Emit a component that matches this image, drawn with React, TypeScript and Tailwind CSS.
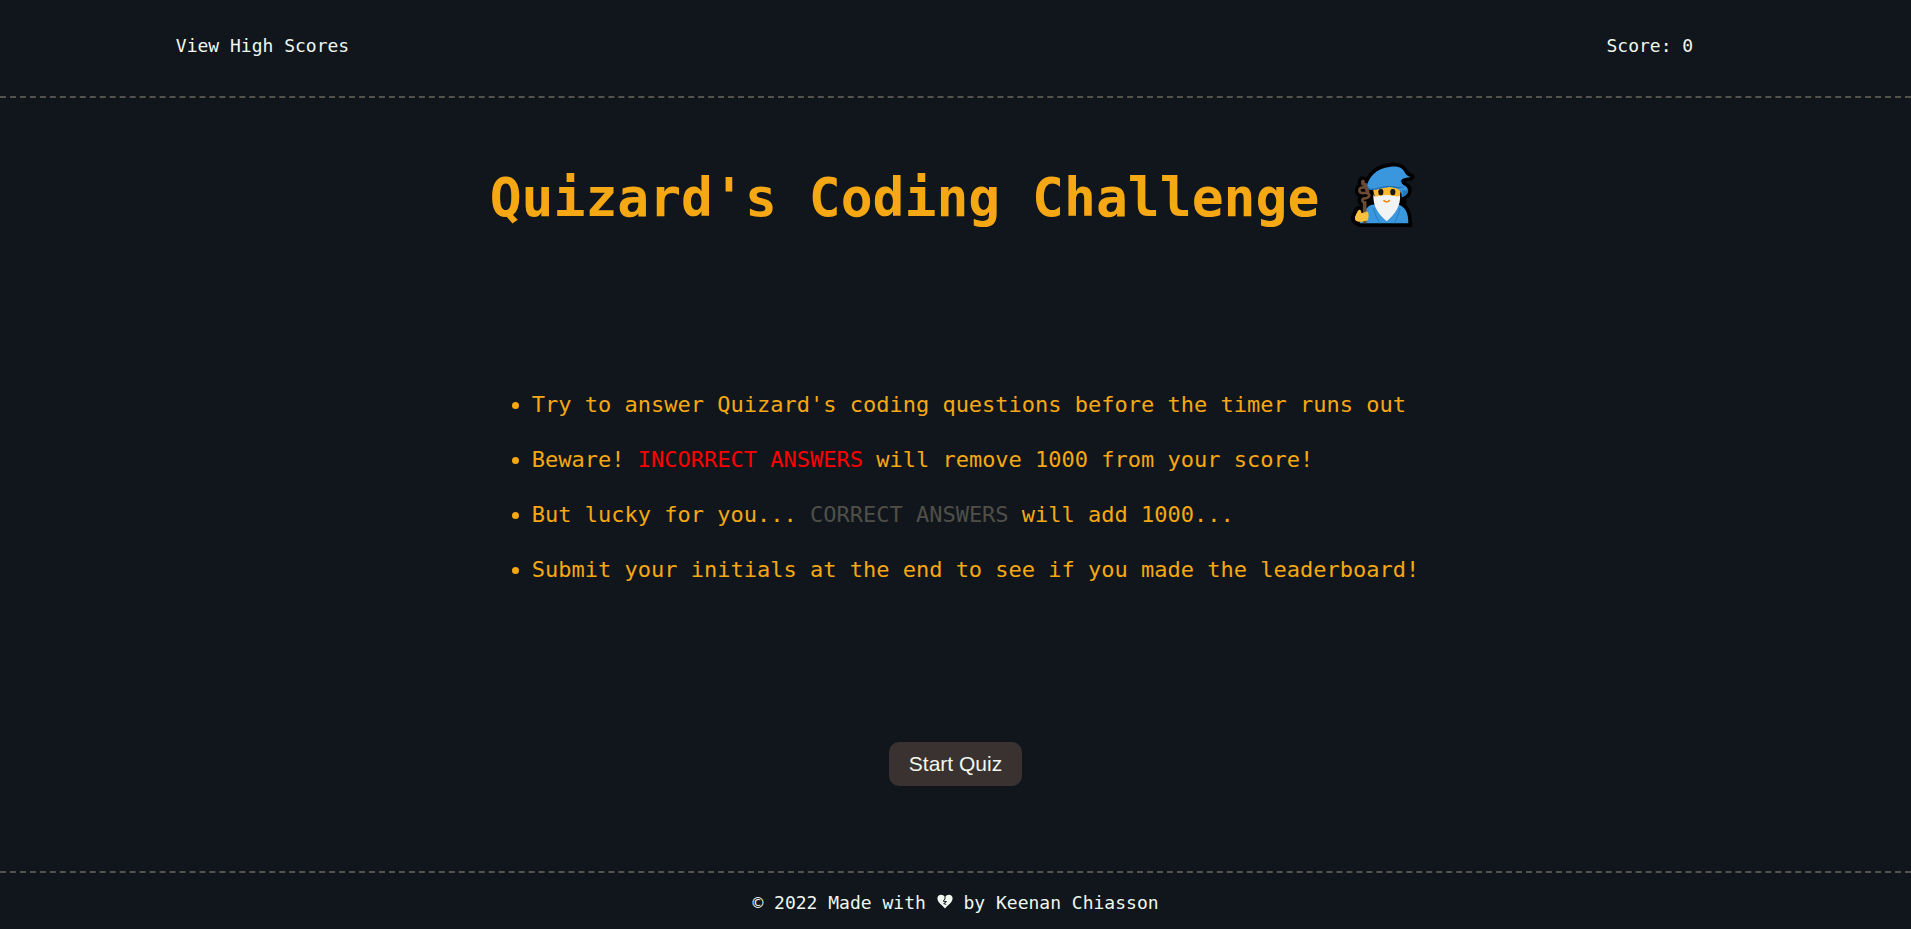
import React from "react";

const HAT =
  "M83 112C89 84 110 57 154 52C176 49 190 56 195 65C199 75 206 81 215 83C203 86 193 84 187 93C184 102 190 106 199 110C211 117 211 136 188 144C190 127 182 119 166 115C144 108 122 121 99 122C90 122 84 117 83 112Z";
const ROBE =
  "M90 170C102 162 118 166 143 168C164 166 174 162 186 169C202 178 208 195 208 222H62L74 186Z";
const STAFF =
  "M77 218V160Q66 156 72 148Q90 147 91 138Q88 128 77 131Q62 133 61 124Q61 114 72 115Q81 114 80 105Q68 106 71 95";
const HAND = "M66 186C66 178 56 180 54 190L48 204Q46 216 60 217H78Q89 214 88 202V190Q84 184 77 188L68 192Z";

function Wizard() {
  return (
    <svg role="img" aria-label="Wizard" viewBox="12 38 234 198" className="h-[66px] w-[78px] shrink-0">
      <g fill="#000" stroke="#000" strokeLinejoin="round" strokeLinecap="round">
        <path d={HAT} strokeWidth="22" />
        <path d={ROBE} strokeWidth="22" />
        <path d={HAND} strokeWidth="24" />
        <path d={STAFF} fill="none" strokeWidth="28" />
        <path d="M96 115H195V170H96Z" strokeWidth="14" />
        <path d="M200 214h18v18h-18z" strokeWidth="2" />
      </g>
      <path d={ROBE} fill="#3a96dd" />
      <path d="M103 176C108 196 116 210 122 222M183 176C178 196 172 210 166 222" fill="none" stroke="#2b7cc0" strokeWidth="3" />
      <path d="M102 112H186C186 145 171 164 143 164C116 164 103 145 102 112Z" fill="#fdb92c" />
      <path d="M103 133C106 146 112 140 120 140C130 140 135 134 143 138C151 134 156 140 166 140C174 140 180 146 183 133C187 172 166 195 143 216C118 193 101 172 103 133Z" fill="#f1f3f4" />
      <path d="M130 148Q143 138 156 148Q152 163 143 163Q134 163 130 148Z" fill="#f1f3f4" />
      <rect x="118" y="119" width="15" height="19" rx="7" fill="#171717" />
      <rect x="154" y="119" width="15" height="19" rx="7" fill="#171717" />
      <path d="M135 154Q143 161 151 154" fill="none" stroke="#ed8b1c" strokeWidth="5" strokeLinecap="round" />
      <path d={HAT} fill="#3a96dd" />
      <path d="M83 112C102 119 123 105 147 106C169 107 184 104 187 93C184 102 190 106 197 110C190 116 178 119 166 115C144 108 122 121 99 122C90 122 84 117 83 112Z" fill="#1e6fb5" />
      <path d="M86 111C104 114 124 101 147 102C169 103 182 101 187 97C188 104 192 107 199 111C186 116 168 111 150 109C130 109 115 118 99 118C92 118 87 115 86 111Z" fill="#3a96dd" />
      <path d="M189 122C193 129 192 137 188 144C202 140 210 130 207 119C202 126 196 125 189 122Z" fill="#2479bd" />
      <path d={STAFF} fill="none" stroke="#6b4a35" strokeWidth="8" strokeLinecap="round" strokeLinejoin="round" />
      <path d="M72 97V103M78 106L82 116L86 128" fill="none" stroke="#6b4a35" strokeWidth="11" strokeLinecap="round" />
      <path d="M77 156V220" fill="none" stroke="#6b4a35" strokeWidth="11" />
      <path d={HAND} fill="#fdc13b" />
      <path d="M77 190V220" fill="none" stroke="#6b4a35" strokeWidth="9" />
      <path d="M48 204Q46 216 60 216H72Q88 216 88 204V194Q82 187 75 191Q62 196 54 190Z" fill="#fdc13b" />
    </svg>
  );
}

function BrokenHeart() {
  return (
    <svg role="img" aria-label="broken heart" viewBox="0 0 16 15" className="inline-block h-[15px] w-4 align-baseline">
      <path d="M8 14.5C5.2 11.1.4 8.6.4 4.3C.4.2 5.7-.4 8 3C10.3-.4 15.6.2 15.6 4.3C15.6 8.6 10.8 11.1 8 14.5Z" fill="#f0f7ee" />
      <path d="M8 2.5V5L6.2 7.2L9.5 7.6L6.7 9.6L9.2 10.4" fill="none" stroke="#11161c" strokeWidth="1" />
    </svg>
  );
}

export default function App() {
  return (
    <div className="flex min-h-screen flex-col bg-[#11161c] font-['DejaVu_Sans_Mono',monospace] text-[#f5a814]">
      <header className="border-b-2 border-dashed border-[#53534b] pt-8 pb-9 pl-[9.2%] pr-[11.4%] text-lg text-[#f0f7ee]">
        <nav className="flex items-center justify-between">
          <a href="#scores">View High Scores</a>
          <p>Score: 0</p>
        </nav>
      </header>

      <main className="flex flex-1 flex-col items-center justify-between pt-16 pb-[85px]">
        <h1 className="flex items-center justify-center gap-6 text-[53px] leading-[60px] font-bold">
          <span className="pt-[6px]">Quizard's Coding Challenge</span>
          <Wizard />
        </h1>

        <ul className="flex list-disc flex-col gap-[27px] pt-1 pl-10 text-[22px] leading-7">
          <li>Try to answer Quizard's coding questions before the timer runs out</li>
          <li>
            Beware! <span className="text-[#ff0000]">INCORRECT ANSWERS</span> will remove 1000 from your score!
          </li>
          <li>
            But lucky for you... <span className="text-[#4f4f48]">CORRECT ANSWERS</span> will add 1000...
          </li>
          <li>Submit your initials at the end to see if you made the leaderboard!</li>
        </ul>

        <button
          type="button"
          className="cursor-pointer rounded-[10px] bg-[#393230] px-5 py-2 font-['Liberation_Sans',sans-serif] text-[21px] leading-7 text-[#f0f7ee]"
        >
          Start Quiz
        </button>
      </main>

      <footer className="border-t-2 border-dashed border-[#53534b] pt-4 pb-3 text-center text-lg text-[#f0f7ee]">
        <p>
          © 2022 Made with <BrokenHeart /> by Keenan Chiasson
        </p>
      </footer>
    </div>
  );
}
